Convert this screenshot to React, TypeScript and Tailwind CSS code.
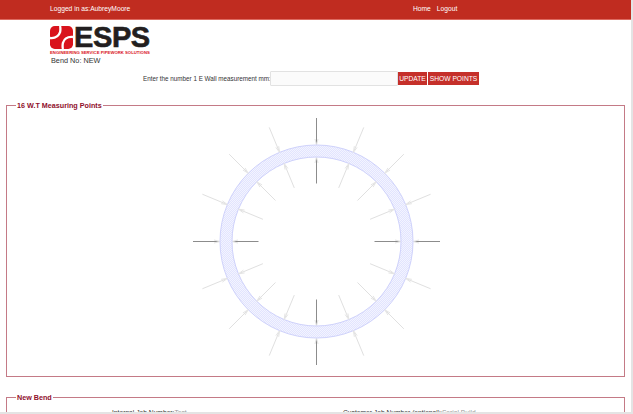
import React from "react";

const CX = 309.5;
const CY = 131.5;
const OUTER = 96.5;
const INNER = 84.5;

function Spoke({ index }: { index: number }) {
  const angle = (index * 22.5 * Math.PI) / 180;
  const ux = Math.sin(angle);
  const uy = -Math.cos(angle);
  const main = index % 4 === 0;
  const color = main ? "#8c8c8c" : "#e0e0e0";
  const pt = (r: number, side = 0) => ({
    x: CX + ux * r - uy * side,
    y: CY + uy * r + ux * side,
  });
  const line = (a: { x: number; y: number }, b: { x: number; y: number }, stroke = color) => (
    <line x1={a.x} y1={a.y} x2={b.x} y2={b.y} stroke={stroke} strokeWidth="1" />
  );
  return (
    <g>
      {line(pt(123.5), pt(main ? 84.5 : OUTER + 2))}
      {line(pt(main ? 96.5 : INNER - 2), pt(58))}
      {/* arrow heads */}
      {line(pt(OUTER), pt(OUTER + 6, 1.5), "#e4e4e4")}
      {line(pt(OUTER), pt(OUTER + 6, -1.5), "#e4e4e4")}
      {line(pt(INNER), pt(INNER - 6, 1.5), "#e4e4e4")}
      {line(pt(INNER), pt(INNER - 6, -1.5), "#e4e4e4")}
    </g>
  );
}

function PipeDiagram() {
  return (
    <svg className="block" width="617" height="266" viewBox="0 0 617 266">
      <defs>
        <pattern id="hatch" width="2" height="2" patternUnits="userSpaceOnUse">
          <rect width="2" height="2" fill="#f3f4ff" />
          <rect width="1" height="1" fill="#e2e4fe" />
          <rect x="1" y="1" width="1" height="1" fill="#e2e4fe" />
        </pattern>
      </defs>
      {Array.from({ length: 4 }, (_, i) => (
        <Spoke key={i} index={i * 4} />
      ))}
      <circle
        cx={CX}
        cy={CY}
        r={(OUTER + INNER) / 2}
        fill="none"
        stroke="url(#hatch)"
        strokeWidth={OUTER - INNER}
      />
      <circle cx={CX} cy={CY} r={OUTER} fill="none" stroke="#cfd2fb" strokeWidth="1" />
      <circle cx={CX} cy={CY} r={INNER} fill="none" stroke="#cfd2fb" strokeWidth="1" />
      {Array.from({ length: 16 }, (_, i) =>
        i % 4 === 0 ? null : <Spoke key={i} index={i} />
      )}
    </svg>
  );
}

function Logo() {
  return (
    <div className="w-[101px]">
      <div className="flex h-[24px] items-center">
        <svg width="23" height="23" viewBox="0 0 24 24" className="shrink-0">
          <rect width="24" height="24" rx="5" fill="#d9131c" />
          <path d="M0 12.5C5 13 9 11 10.5 6.5C11 4 11 2 10.5 0" fill="none" stroke="#fff" strokeWidth="2.4" />
          <path d="M24 11.5C19 11 15 13 13.5 17.5C13 20 13 22 13.5 24" fill="none" stroke="#fff" strokeWidth="2.4" />
        </svg>
        <span className="ml-[1px] text-[29px] font-bold leading-none tracking-[-0.4px] text-[#231f20] [-webkit-text-stroke:0.6px_#231f20]">
          ESPS
        </span>
      </div>
      <div className="mt-[1px] whitespace-nowrap text-[4.25px] font-bold leading-[5px] text-[#d9131c]">
        ENGINEERING SERVICE PIPEWORK SOLUTIONS
      </div>
    </div>
  );
}

export default function App() {
  return (
    <div className="h-[414px] w-[633px] overflow-hidden border-r-2 border-b-2 border-[#e4e4e4] bg-white font-['Liberation_Sans',Arial,sans-serif] text-[6.3px] text-[#333]">
      <header className="flex h-[20px] items-center border-b border-[#dd6a60] bg-[#c02c20] text-[6.7px] text-white">
        <span className="ml-[50px] w-[363px]">Logged in as:AubreyMoore</span>
        <nav className="flex gap-[6px]">
          <a>Home</a>
          <a>Logout</a>
        </nav>
      </header>

      <div className="ml-[50px] mt-[5px]">
        <Logo />
        <div className="ml-[1px] mt-[1px] text-[7.3px] leading-[10px]">Bend No: NEW</div>
      </div>

      <form className="ml-[143px] mt-[5px] flex items-center">
        <label className="w-[127px] whitespace-nowrap">Enter the number 1 E Wall measurement mm:</label>
        <input
          type="text"
          className="h-[15px] w-[128px] rounded-[1px] border border-[#e2e2e2] bg-[#fbfbfb]"
        />
        <button type="button" className="h-[13px] w-[29px] whitespace-nowrap bg-[#c5302a] text-center text-[6.7px] leading-[13px] text-white">
          UPDATE
        </button>
        <button type="button" className="ml-[1px] h-[13px] w-[51px] whitespace-nowrap bg-[#c5302a] text-center text-[6.7px] leading-[13px] text-white">
          SHOW POINTS
        </button>
      </form>

      <fieldset className="mx-[6px] mt-[15px] w-[619px] border border-[#c47a86]">
        <legend className="ml-[9px] px-[1px] text-[7.2px] font-bold leading-[9px] text-[#8f0f2b]">
          16 W.T Measuring Points
        </legend>
        <PipeDiagram />
      </fieldset>

      <fieldset className="mx-[6px] mt-[16px] w-[619px] border border-[#c47a86]">
        <legend className="ml-[9px] px-[1px] text-[7.2px] font-bold leading-[9px] text-[#8f0f2b]">
          New Bend
        </legend>
        <div className="mt-[6px] flex text-[6.7px] leading-[10px]">
          <span className="ml-[105px] w-[231px]">
            Internal Job Number:<span className="text-[#999]">Test</span>
          </span>
          <span>
            Customer Job Number (optional):<span className="text-[#999]">Serial Build</span>
          </span>
        </div>
      </fieldset>
    </div>
  );
}
